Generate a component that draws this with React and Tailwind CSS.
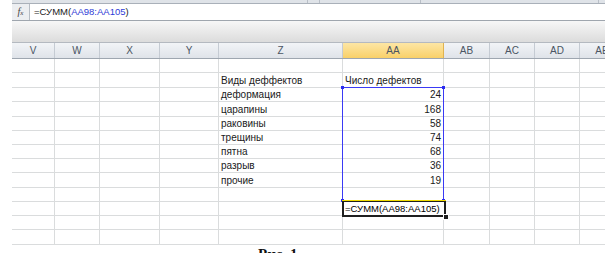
import React from 'react';

const cols = [
  { k: 'V', w: 'w-[43px]' },
  { k: 'W', w: 'w-[45px]' },
  { k: 'X', w: 'w-[60px]' },
  { k: 'Y', w: 'w-[59px]' },
  { k: 'Z', w: 'w-[124px]' },
  { k: 'AA', w: 'w-[101px]' },
  { k: 'AB', w: 'w-[46px]' },
  { k: 'AC', w: 'w-[45px]' },
  { k: 'AD', w: 'w-[45px]' },
  { k: 'AE', w: 'w-[45px]' },
];

const rows = [
  { h: 'h-[14px]' },
  { h: 'h-[15px]', z: 'Виды деффектов', aa: 'Число дефектов', left: true },
  { h: 'h-[14px]', z: 'деформация', aa: '24' },
  { h: 'h-[15px]', z: 'царапины', aa: '168' },
  { h: 'h-[14px]', z: 'раковины', aa: '58' },
  { h: 'h-[14px]', z: 'трещины', aa: '74' },
  { h: 'h-[14px]', z: 'пятна', aa: '68' },
  { h: 'h-[14px]', z: 'разрыв', aa: '36' },
  { h: 'h-[15px]', z: 'прочие', aa: '19' },
  { h: 'h-[14px]' },
  { h: 'h-[14px]' },
  { h: 'h-[14px]' },
  { h: 'h-[15px]' },
];

function Cell({ col, row }) {
  let content = null;
  if (col.k === 'Z' && row.z) {
    content = <span className="pl-[2px]">{row.z}</span>;
  }
  if (col.k === 'AA' && row.aa) {
    content = row.left
      ? <span className="pl-[2px]">{row.aa}</span>
      : <span className="ml-auto pr-[2px]">{row.aa}</span>;
  }
  return (
    <div className={`${col.w} shrink-0 h-full flex items-end pb-[1px] leading-none border-r border-[#dadcdd] whitespace-nowrap`}>
      {content}
    </div>
  );
}

export default function App() {
  return (
    <div className="w-[605px] h-[253px] overflow-hidden bg-white flex text-[#1a1a1a]" style={{ fontFamily: '"Liberation Sans", Arial, sans-serif' }}>
      <div className="w-[12px] shrink-0" />
      <div className="flex-1 flex flex-col min-w-0">
        {/* ribbon bottom */}
        <div className="h-[4px] bg-[#dfe3e8] border-b border-[#a9b0b9] relative shrink-0">
          <div className="absolute left-[295px] top-0 h-full border-l border-[#b9bfc7]" />
          <div className="absolute left-[307px] top-0 h-full border-l border-[#b9bfc7]" />
          <div className="absolute left-[408px] top-0 h-full border-l border-[#b9bfc7]" />
          <div className="absolute left-[586px] top-0 h-full border-l border-[#b9bfc7]" />
        </div>
        {/* formula bar */}
        <div className="h-[17px] flex border-b border-[#9fa6ae] shrink-0">
          <div className="w-[18px] bg-[#eceef1] border-r border-[#b6bcc4] flex items-center justify-center">
            <span className="text-[10px] italic text-[#444] leading-none" style={{ fontFamily: '"Liberation Serif", serif' }}>f<span className="text-[7px]">x</span></span>
          </div>
          <div className="flex-1 flex items-center pl-[4px] text-[9.5px] whitespace-nowrap">
            =СУММ(<span className="text-[#2f3cd6]">AA98:AA105</span>)
          </div>
        </div>
        {/* gray gap */}
        <div className="h-[22px] bg-gradient-to-b from-[#f7f7f7] to-[#dcdcdc] border-b border-[#b4b9c0] shrink-0" />
        {/* column header */}
        <div className="h-[16px] flex border-b border-[#9ea6b0] shrink-0 text-[10px] text-[#4b5563]">
          {cols.map((c) => (
            <div
              key={c.k}
              className={`${c.w} shrink-0 flex items-center justify-center border-r ${c.k === 'AA' ? 'bg-gradient-to-b from-[#fde6a4] to-[#f9d068] border-[#e0b350]' : 'bg-gradient-to-b from-[#f2f4f7] to-[#dfe3e9] border-[#c5cbd3]'}`}
            >
              {c.k}
            </div>
          ))}
        </div>
        {/* grid */}
        <div className="relative text-[10px] shrink-0">
          {rows.map((r, i) => (
            <div key={i} className={`${r.h} flex border-b border-[#dadcdd]`}>
              {cols.map((c) => (
                <Cell key={c.k} col={c} row={r} />
              ))}
            </div>
          ))}
          {/* selected range */}
          <div className="absolute left-[330px] top-[28px] w-[102px] h-[114px] border border-[#3a3af5]" />
          <div className="absolute left-[329px] top-[27px] w-[3px] h-[3px] bg-[#2b2bf0]" />
          <div className="absolute left-[430px] top-[27px] w-[3px] h-[3px] bg-[#2b2bf0]" />
          <div className="absolute left-[329px] top-[140px] w-[3px] h-[3px] bg-[#2b2bf0]" />
          <div className="absolute left-[430px] top-[140px] w-[3px] h-[3px] bg-[#2b2bf0]" />
          {/* active cell */}
          <div className="absolute left-[330px] top-[141px] w-[104px] h-[17px] border-2 border-[#1f1f1f] bg-white flex items-center pl-[1px] text-[9.5px] leading-none text-black whitespace-nowrap">
            =СУММ(AA98:AA105)
          </div>
          <div className="absolute left-[330px] top-[141px] w-[104px] h-[1px] bg-[#f0dc00]" />
          <div className="absolute left-[431px] top-[155px] w-[4px] h-[4px] bg-[#1f1f1f] border border-white box-content" />
        </div>
        <div className="pl-[246px] pt-[2px] text-[15px] font-bold text-[#111] leading-none whitespace-nowrap" style={{ fontFamily: '"Liberation Serif", serif' }}>
          Рис. 1
        </div>
      </div>
    </div>
  );
}
